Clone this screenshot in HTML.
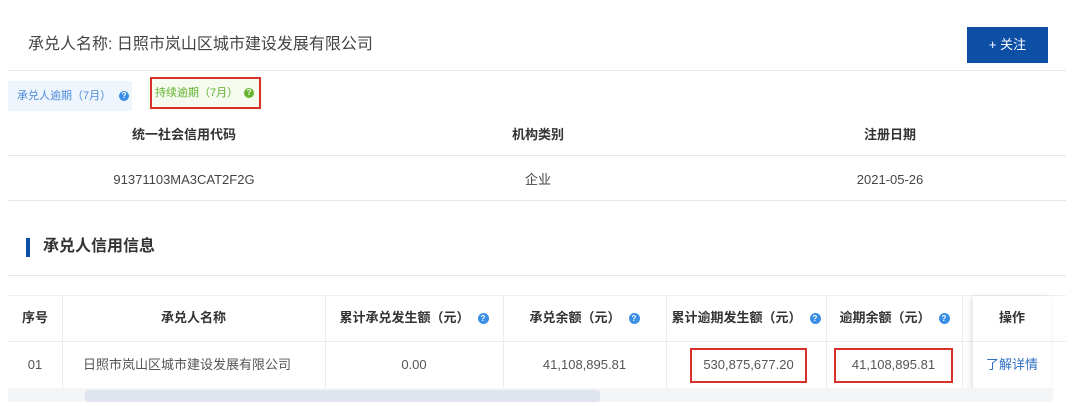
<!DOCTYPE html>
<html><head><meta charset="utf-8"><style>
*{margin:0;padding:0;box-sizing:border-box}
body{width:1080px;height:406px;background:#fff;position:relative;overflow:hidden;font-family:"Liberation Sans","Noto Sans CJK SC",sans-serif;color:#333}
.a{position:absolute}
.hl{position:absolute;height:1px;background:#e8e8e8}
.c{position:absolute;text-align:center;font-size:13px;line-height:20px;height:20px}
.q{display:inline-block;width:11px;height:11px;border-radius:50%;background:#3a8ee6;color:#fff;font-size:8px;line-height:11px;text-align:center;font-weight:bold;vertical-align:middle;margin-left:8px}
.th{font-weight:bold;color:#333}
.vl{position:absolute;width:1px;background:#ececec}
.rb{position:absolute;border:2px solid #d9302a}
</style></head><body>
<div class="a" style="left:28px;top:33px;font-size:16px;line-height:24px;color:#444">承兑人名称: 日照市岚山区城市建设发展有限公司</div>
<div class="a" style="left:967px;top:27px;width:81px;height:36px;background:#0e4fa6;color:#fff;font-size:13px;text-align:center;line-height:36px">+ 关注</div>
<div class="hl" style="left:8px;top:70px;width:1058px"></div>
<div class="a" style="left:8px;top:81px;width:124px;height:30px;background:#eef5fd;color:#4a8cd8;font-size:11px;line-height:30px;padding-left:9px">承兑人逾期（7月）<span class="q" style="width:10px;height:10px;line-height:10px">?</span></div>
<div class="a" style="left:148px;top:78px;width:114px;height:32px;background:#f6fbef"></div>
<div class="rb" style="left:150px;top:77px;width:111px;height:32px"></div>
<div class="a" style="left:155px;top:83px;color:#5fb12d;font-size:11px;line-height:20px">持续逾期（7月）<span class="q" style="background:#67b32e;width:10px;height:10px;line-height:10px;margin-left:6px">?</span></div>
<div class="c th" style="left:8px;width:352px;top:125px">统一社会信用代码</div>
<div class="c th" style="left:362px;width:352px;top:125px">机构类别</div>
<div class="c th" style="left:714px;width:352px;top:125px">注册日期</div>
<div class="hl" style="left:8px;top:155px;width:1058px"></div>
<div class="c" style="left:8px;width:352px;top:170px;color:#444">91371103MA3CAT2F2G</div>
<div class="c" style="left:362px;width:352px;top:170px;color:#444">企业</div>
<div class="c" style="left:714px;width:352px;top:170px;color:#444">2021-05-26</div>
<div class="hl" style="left:8px;top:200px;width:1058px"></div>
<div class="a" style="left:26px;top:238px;width:4px;height:19px;background:#0e4fa6"></div>
<div class="a" style="left:43px;top:236px;font-size:16px;line-height:22px;font-weight:bold;color:#333">承兑人信用信息</div>
<div class="hl" style="left:8px;top:275px;width:1058px"></div>
<div class="hl" style="left:8px;top:295px;width:1058px;background:#f0f0f0"></div>
<div class="hl" style="left:8px;top:341px;width:1058px;background:#ececec"></div>
<div class="vl" style="left:62px;top:296px;height:92px"></div>
<div class="vl" style="left:325px;top:296px;height:92px"></div>
<div class="vl" style="left:503px;top:296px;height:92px"></div>
<div class="vl" style="left:666px;top:296px;height:92px"></div>
<div class="vl" style="left:826px;top:296px;height:92px"></div>
<div class="a" style="left:962px;top:296px;width:1px;height:92px;background:#ececec"></div>
<div class="a" style="left:973px;top:296px;width:78px;height:95px;background:#fff;box-shadow:-2px 1px 6px rgba(0,0,0,.12)"></div>
<div class="hl" style="left:973px;top:341px;width:78px;background:#ececec"></div>
<div class="c th" style="left:8px;width:54px;top:308px">序号</div>
<div class="c th" style="left:62px;width:263px;top:308px">承兑人名称</div>
<div class="c th" style="left:325px;width:178px;top:308px">累计承兑发生额（元）<span class="q">?</span></div>
<div class="c th" style="left:503px;width:163px;top:308px">承兑余额（元）<span class="q">?</span></div>
<div class="c th" style="left:666px;width:160px;top:308px">累计逾期发生额（元）<span class="q">?</span></div>
<div class="c th" style="left:826px;width:137px;top:308px">逾期余额（元）<span class="q">?</span></div>
<div class="c th" style="left:973px;width:78px;top:308px">操作</div>
<div class="c" style="left:8px;width:54px;top:355px;color:#555">01</div>
<div class="c" style="left:62px;width:263px;top:355px;color:#555;text-align:left;padding-left:21px">日照市岚山区城市建设发展有限公司</div>
<div class="c" style="left:325px;width:178px;top:355px;color:#555">0.00</div>
<div class="c" style="left:503px;width:163px;top:355px;color:#555">41,108,895.81</div>
<div class="rb" style="left:690px;top:348px;width:117px;height:35px"></div>
<div class="c" style="left:690px;width:117px;top:355px;color:#555">530,875,677.20</div>
<div class="rb" style="left:834px;top:348px;width:119px;height:35px"></div>
<div class="c" style="left:834px;width:119px;top:355px;color:#555">41,108,895.81</div>
<div class="c" style="left:973px;width:78px;top:355px;color:#2f6fc4">了解详情</div>
<div class="a" style="left:8px;top:388px;width:1045px;height:14px;background:#f4f5f7"></div>
<div class="a" style="left:85px;top:390px;width:515px;height:12px;background:#e0e4ee;border-radius:3px"></div>
</body></html>
